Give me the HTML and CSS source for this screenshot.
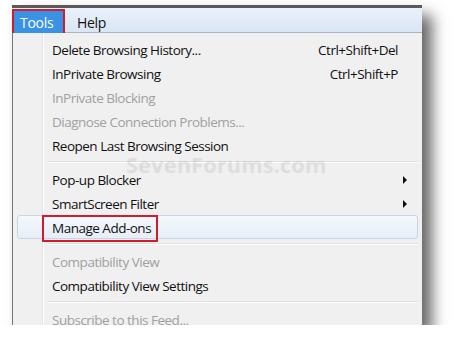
FILE: index.html
```html
<!doctype html>
<html>
<head>
    <meta charset="UTF-8">
    <title>Tools menu</title>
    <link rel="stylesheet" href="styles.css">
</head>
<body>
    <div class="window">
        <div class="menubar">
            <div class="menubar-item active">Tools</div>
            <div class="menubar-item">Help</div>
        </div>
        <div class="menu">
            <div class="item"><span>Delete Browsing History...</span><span class="key">Ctrl+Shift+Del</span></div>
            <div class="item"><span>InPrivate Browsing</span><span class="key">Ctrl+Shift+P</span></div>
            <div class="item disabled"><span>InPrivate Blocking</span></div>
            <div class="item disabled"><span>Diagnose Connection Problems...</span></div>
            <div class="item"><span>Reopen Last Browsing Session</span></div>
            <div class="sep"></div>
            <div class="item"><span>Pop-up Blocker</span><span class="arrow"></span></div>
            <div class="item"><span>SmartScreen Filter</span><span class="arrow"></span></div>
            <div class="item hover"><span class="marked">Manage Add-ons</span></div>
            <div class="sep"></div>
            <div class="item disabled"><span>Compatibility View</span></div>
            <div class="item"><span>Compatibility View Settings</span></div>
            <div class="sep"></div>
            <div class="item disabled"><span>Subscribe to this Feed...</span></div>
            <div class="watermark">SevenForums.com</div>
        </div>
    </div>
</body>
</html>
```
FILE: styles.css
```css
body {
    margin: 0;
    background: #fff;
    font-family: "Open Sans", "Noto Sans", sans-serif;
}
.window {
    margin: 5px 0 0 12px;
    width: 410px;
    height: 320px;
    overflow: hidden;
    border-top: 3px solid #5a5a5a;
    box-sizing: border-box;
    box-shadow: 10px 10px 14px rgba(0, 0, 0, 0.6);
    background: #f0f0f0;
}
.menubar {
    display: flex;
    height: 25px;
    box-sizing: border-box;
    padding-top: 3px;
    background: linear-gradient(#eaf1fa, #dae6f4);
    border-bottom: 1px solid #a9b5c3;
}
.menubar-item {
    height: 22px;
    line-height: 24px;
    padding: 0 8px;
    font-size: 14px;
    letter-spacing: -0.3px;
    color: #111;
}
.menubar-item.active {
    position: relative;
    width: 49px;
    height: 24px;
    box-sizing: border-box;
    margin: 0 6px 0 2px;
    background: #3a92e4;
    color: #fff;
    outline: 2px solid #d11c2c;
    padding: 0 0 0 6px;
}
.menu {
    position: relative;
    padding: 4px 4px 0 4px;
    border-left: 1px solid #777;
    height: 100%;
    background: linear-gradient(90deg, #f0f0f0 29px, #e3e3e3 29px, #e3e3e3 30px, #fff 30px, #fff 31px, #f0f0f0 31px);
}
.item {
    display: flex;
    align-items: center;
    justify-content: space-between;
    height: 24px;
    padding: 2px 20px 0 35px;
    box-sizing: border-box;
    font-size: 13.5px;
    letter-spacing: -0.5px;
    color: #111;
}
.item.disabled {
    color: #a0a0a0;
}
.arrow {
    width: 0;
    height: 0;
    border-top: 4px solid transparent;
    border-bottom: 4px solid transparent;
    border-left: 4px solid #111;
    margin-right: -9px;
}
.sep {
    height: 10px;
    margin-left: 31px;
    background: linear-gradient(transparent 4px, #e0e0e0 4px, #e0e0e0 5px, #fff 5px, #fff 6px, transparent 6px);
}
.item.hover {
    background: linear-gradient(#f5f8fc, #e6eef8);
    border: 1px solid #c6d5e8;
    border-radius: 3px;
    padding-left: 34px;
}
.marked {
    outline: 2px solid #d11c2c;
    padding: 2px 5px 3px 8px;
    margin-left: -8px;
}
.watermark {
    position: absolute;
    left: 113px;
    top: 116px;
    font-size: 22px;
    font-weight: bold;
    color: rgba(0, 0, 0, 0.05);
    text-shadow: 0 0 2px rgba(0, 0, 0, 0.05);
}
```
